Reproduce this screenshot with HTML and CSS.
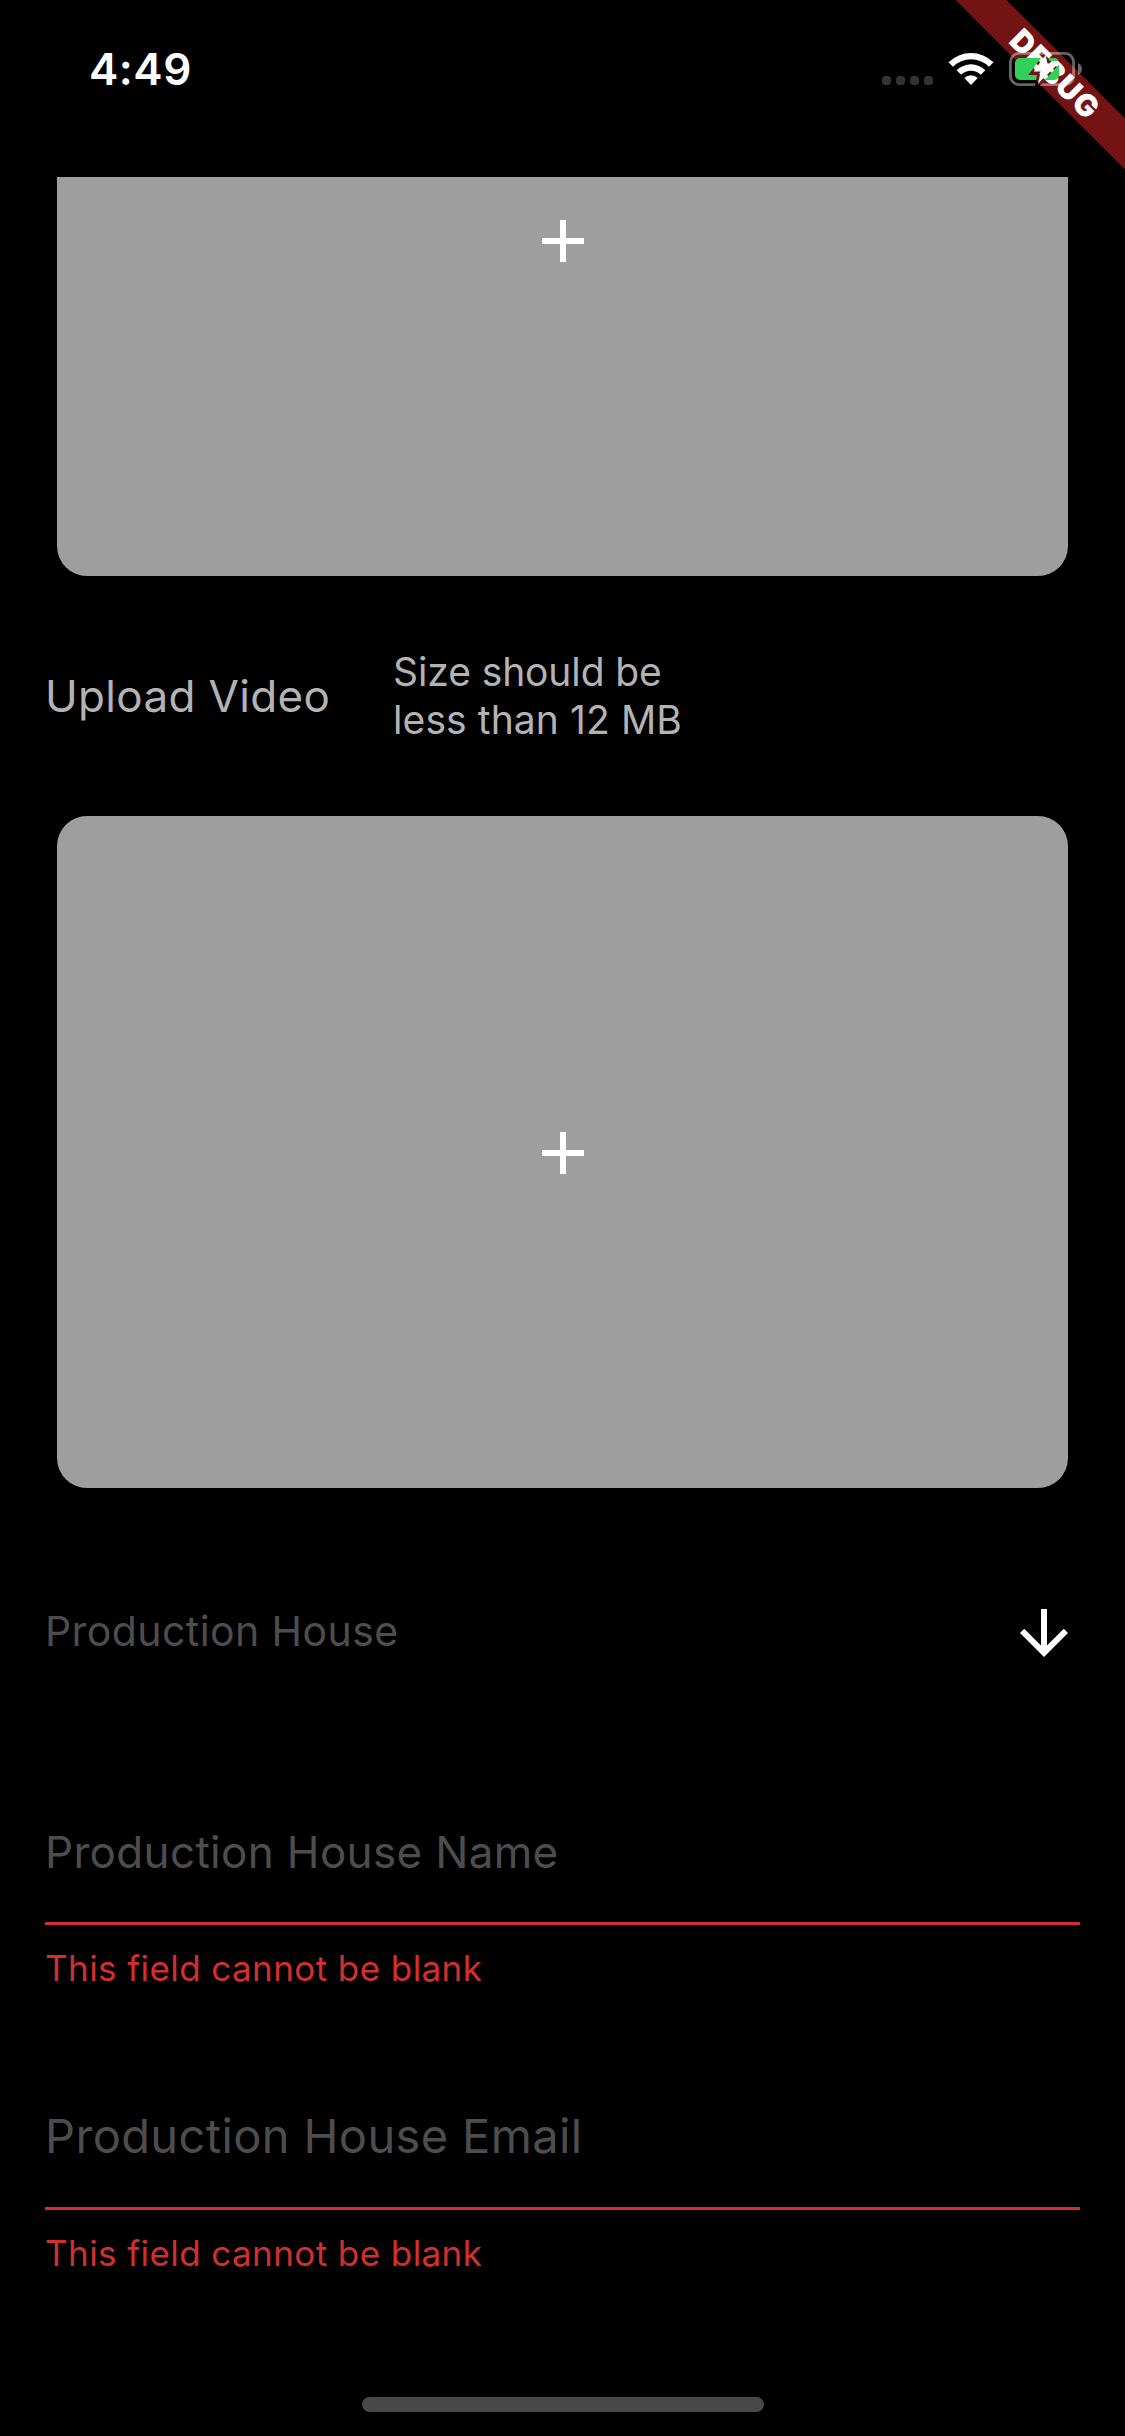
FILE: index.html
```
<!DOCTYPE html>
<html lang="en">
<head>
<meta charset="utf-8">
<title>Upload</title>
<link rel="stylesheet" href="styles.css">
</head>
<body>
<header class="status">
  <span class="time">4:49</span>
  <div class="indicators">
    <div class="dots"><i></i><i></i><i></i><i></i></div>
    <svg class="wifi" viewBox="0 0 46 34" width="46" height="34">
      <path d="M0.5 10.3A31.8 31.8 0 0 1 45.5 10.3L41 14.8A25.5 25.5 0 0 0 5 14.8Z"/>
      <path d="M8.6 18.3A20.4 20.4 0 0 1 37.4 18.3L32.8 22.8A14 14 0 0 0 13.2 22.8Z"/>
      <path d="M16.3 26.1A9.5 9.5 0 0 1 29.7 26.1L23 33Z"/>
    </svg>
    <svg class="battery" viewBox="0 0 74 34" width="74" height="34">
      <mask id="gap">
        <rect width="74" height="34" fill="#fff"/>
        <path d="M36.5 4L24.3 20.5H31L29 32L47.5 11.5H38.5Z" fill="#000" stroke="#000" stroke-width="5"/>
      </mask>
      <g mask="url(#gap)">
        <rect class="shell" x="1.4" y="1.4" width="63.2" height="31.2" rx="8.6"/>
        <rect class="charge" x="6" y="6" width="44" height="22" rx="5"/>
      </g>
      <path class="nub" d="M69 11V23Q73 21 73 17Q73 13 69 11Z"/>
      <path class="bolt" d="M36.5 3L24.6 19.5H31.6L29 32L47.5 11.5H38.5Z"/>
    </svg>
  </div>
</header>
<main>
  <div class="tile tile-cut"><svg viewBox="0 0 24 24" width="72" height="72"><path d="M19 13h-6v6h-2v-6H5v-2h6V5h2v6h6z"/></svg></div>
  <section class="caption">
    <span class="title">Upload Video</span>
    <span class="hint"><span class="hint-top">Size should be</span><br><span class="hint-limit">less than 12 MB</span></span>
  </section>
  <div class="tile"><svg viewBox="0 0 24 24" width="72" height="72"><path d="M19 13h-6v6h-2v-6H5v-2h6V5h2v6h6z"/></svg></div>
  <section class="picker">
    <span class="picker-label">Production House</span>
    <svg viewBox="0 0 24 24" width="72" height="72"><path d="M20 12l-1.41-1.41L13 16.17V4h-2v12.17l-5.58-5.59L4 12l8 8z"/></svg>
  </section>
  <div class="field name">
    <div class="input">Production House Name</div>
    <div class="error">This field cannot be blank</div>
  </div>
  <div class="field email">
    <div class="input">Production House Email</div>
    <div class="error">This field cannot be blank</div>
  </div>
</main>
<div class="home"></div>
<div class="corner"><div class="ribbon">DEBUG</div></div>
</body>
</html>
```
FILE: styles.css
```
* { box-sizing: border-box; }
body {
  position: relative;
  width: 1125px;
  height: 2436px;
  margin: 0;
  overflow: hidden;
  background: #000;
  font-family: Inter, "Liberation Sans", sans-serif;
}
svg { display: block; flex: none; }
.status {
  display: flex;
  justify-content: space-between;
  height: 177px;
  padding: 0 42px 0 89px;
}
.time {
  padding-top: 39px;
  color: #fff;
  font-size: 44px;
  font-weight: 600;
  letter-spacing: .5px;
  line-height: 60px;
}
.indicators { position: relative; z-index: 2; display: flex; padding-top: 52px; }
.dots { display: flex; gap: 5px; margin: 24px 15px 0 0; }
.dots i { width: 9px; height: 9px; border-radius: 3.5px; background: #333; }
.wifi { margin-right: 15px; fill: #fff; }
.shell { fill: none; stroke: #fff; stroke-opacity: .4; stroke-width: 2.8; }
.charge { fill: #30d158; }
.nub { fill: #fff; fill-opacity: .4; }
.bolt { fill: #fff; }
.tile {
  display: flex;
  align-items: center;
  justify-content: center;
  height: 672px;
  margin: 0 57px;
  padding-top: 2px;
  border-radius: 30px;
  background: #9e9e9e;
  fill: #fff;
}
.tile-cut {
  align-items: flex-start;
  height: 399px;
  padding-top: 28px;
  border-radius: 0 0 30px 30px;
}
.caption {
  display: flex;
  align-items: center;
  height: 240px;
  padding-left: 45px;
  color: #b3b3b3;
}
.title { width: 348px; font-size: 44px; letter-spacing: .33px; }
.hint { font-size: 39px; line-height: 48px; }
.hint-top { letter-spacing: -.1px; }
.hint-limit { letter-spacing: .1px; }
.picker {
  display: flex;
  align-items: center;
  justify-content: space-between;
  height: 288px;
  padding: 0 45px;
  color: #4d4d4d;
  fill: #fff;
}
.picker svg { margin-top: 2px; }
.picker-label { margin-bottom: 2px; font-size: 41px; letter-spacing: .42px; }
.field { margin: 0 45px; }
.input {
  padding: 46px 0 40px;
  border-bottom: 3px solid #d32f2f;
  color: #4d4d4d;
  font-size: 44px;
  letter-spacing: .33px;
  line-height: 60px;
}
.email .input { padding: 118px 0 41px; font-size: 47px; letter-spacing: .37px; }
.error {
  margin-top: 23px;
  color: #d32f2f;
  font-size: 35px;
  letter-spacing: .42px;
  line-height: 40px;
}
.home {
  position: absolute;
  left: 362px;
  top: 2397px;
  width: 402px;
  height: 15px;
  border-radius: 7.5px;
  background: #484848;
}
.corner { position: absolute; top: 0; right: 0; width: 180px; height: 180px; overflow: hidden; }
.ribbon {
  position: absolute;
  left: -42px;
  top: 54px;
  width: 300px;
  height: 36px;
  padding-left: 6px;
  transform: rotate(45deg);
  background: #721414;
  color: #fff;
  font-size: 30.6px;
  font-weight: 900;
  letter-spacing: 1.2px;
  line-height: 36px;
  text-align: center;
}
```
